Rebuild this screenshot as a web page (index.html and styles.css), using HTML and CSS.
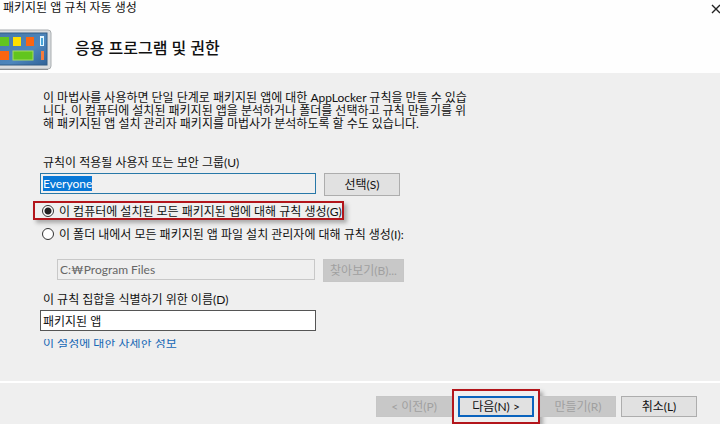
FILE: index.html
```
<!DOCTYPE html>
<html lang="ko">
<head>
  <meta charset="utf-8">
  <title>패키지된 앱 규칙 자동 생성</title>
  <link rel="stylesheet" href="styles.css">
</head>
<body>
  <div class="titlebar">
    <span>패키지된 앱 규칙 자동 생성</span>
    <button class="close" type="button" aria-label="닫기">
      <svg width="10" height="10" viewBox="0 0 10 10"><path d="M1 1L9 9M9 1L1 9" stroke="#222" stroke-width="1.4"/></svg>
    </button>
  </div>
  <header class="banner">
    <svg class="logo" width="52" height="42" viewBox="0 0 52 42">
      <defs>
        <linearGradient id="screen" x1="0" y1="0" x2="1" y2="1">
          <stop offset="0" stop-color="#4779a8"/>
          <stop offset="0.6" stop-color="#4d86bd"/>
          <stop offset="1" stop-color="#2f6298"/>
        </linearGradient>
      </defs>
      <rect x="-6" y="1" width="57" height="39" rx="3" fill="#dadddf" stroke="#a9adb0"/>
      <path d="M0 40.500H48" stroke="#8d9194"/>
      <rect x="-2" y="4" width="49" height="32" fill="url(#screen)" stroke="#315c86"/>
      <rect x="0" y="8" width="9" height="9" fill="#62c51d"/>
      <rect x="13" y="8" width="8" height="9" fill="#ffe000"/>
      <rect x="26" y="8" width="8" height="9" fill="#fb6511"/>
      <rect x="40" y="7" width="4" height="10" fill="#e4f7ff"/>
      <rect x="41" y="9" width="2" height="7" fill="#48a5da"/>
      <rect x="0" y="22" width="9" height="9" fill="#fb6511"/>
      <rect x="13" y="22" width="20" height="9" fill="#62c51d" stroke="#a5dd61"/>
      <rect x="41" y="22" width="3" height="9" fill="#f57b3c"/>
    </svg>
    <h1>응용 프로그램 및 권한</h1>
  </header>
  <main class="page">
    <p class="intro">이 마법사를 사용하면 단일 단계로 패키지된 앱에 대한 AppLocker 규칙을 만들 수 있습<br>니다. 이 컴퓨터에 설치된 패키지된 앱을 분석하거나 폴더를 선택하고 규칙 만들기를 위<br>해 패키지된 앱 설치 관리자 패키지를 마법사가 분석하도록 할 수도 있습니다.</p>

    <label class="caption" for="group">규칙이 적용될 사용자 또는 보안 그룹(U)</label>
    <div class="row">
      <div class="field focused">
        <input id="group" type="text" value="Everyone" readonly autofocus>
      </div>
      <button type="button">선택(S)</button>
    </div>

    <div class="choice marked">
      <input id="installed" type="radio" name="source" checked>
      <label for="installed">이 컴퓨터에 설치된 모든 패키지된 앱에 대해 규칙 생성(G)</label>
    </div>
    <div class="choice">
      <input id="folder" type="radio" name="source">
      <label for="folder">이 폴더 내에서 모든 패키지된 앱 파일 설치 관리자에 대해 규칙 생성(I):</label>
    </div>
    <div class="row path">
      <div class="field off">
        <input type="text" value="C:₩Program Files" aria-label="폴더" disabled>
      </div>
      <button class="browse" type="button" disabled>찾아보기(B)...</button>
    </div>

    <label class="caption" for="name">이 규칙 집합을 식별하기 위한 이름(D)</label>
    <div class="row">
      <div class="field">
        <input id="name" type="text" value="패키지된 앱">
      </div>
    </div>
    <a class="more" href="#">이 설정에 대한 자세한 정보</a>
  </main>
  <footer class="actions">
    <button type="button" disabled>&lt; 이전(P)</button>
    <span class="next"><button class="primary" type="button">다음(N) &gt;</button></span>
    <button type="button" disabled>만들기(R)</button>
    <button class="cancel" type="button">취소(L)</button>
  </footer>
  <script>
    // the group box opens with its text selected
    document.getElementById('group').select();
  </script>
</body>
</html>
```

FILE: styles.css
```
* {
  box-sizing: border-box;
}
body {
  margin: 0;
  min-height: 100vh;
  display: flex;
  flex-direction: column;
  background: #efefef;
  color: #111;
  font-family: Lato, "Noto Sans CJK KR", sans-serif;
  font-size: 12px;
  line-height: 13px;
}
button, input {
  font: inherit;
  color: inherit;
}
.titlebar {
  display: flex;
  justify-content: space-between;
  height: 20px;
  padding: 1px 0 0 3px;
  background: #fefefe;
}
.close {
  width: 16px;
  height: 14px;
  padding: 1px 0 0;
  border: 0;
  background: none;
}
.close svg {
  display: block;
  margin-left: 7px;
}
.banner {
  display: flex;
  gap: 23px;
  height: 53px;
  padding-top: 9px;
  background: #fefefe;
}
.banner h1 {
  margin: 9px 0 0;
  font-size: 16px;
  font-weight: 500;
  line-height: 20px;
}
.page {
  flex: 1;
  padding: 18px 40px 0;
}
.intro {
  margin: 0 0 26px 3px;
}
.caption {
  display: block;
  margin: 0 0 4px 3px;
}
.row {
  display: flex;
  align-items: flex-start;
  gap: 8px;
}
.field {
  width: 276px;
  height: 21px;
  border: 1px solid #555;
  background: #fff;
}
.field input {
  display: block;
  width: 100%;
  height: 19px;
  padding: 0 2px;
  border: 0;
  outline: 0;
  background: none;
}
.field input::selection {
  background: #0878d7;
  color: #fff;
}
.focused {
  border-color: #2878a8;
  background: #f0f0f0;
}
.off {
  width: 258px;
  border-color: #c8c8c8;
  background: none;
  color: #666;
}
button {
  width: 76px;
  height: 23px;
  padding: 0;
  border: 1px solid #adadad;
  background: #e1e1e1;
}
button:disabled {
  border-color: #c6c6c6;
  background: #c8c8c8;
  color: #a0a0a0;
}
.choice {
  display: flex;
  align-items: center;
  gap: 5px;
  width: max-content;
  height: 19px;
  margin: 4px 0 0 -7px;
  padding-left: 9px;
}
.choice label {
  padding-top: 2px;
}
.choice input {
  appearance: none;
  width: 12px;
  height: 12px;
  margin: 0;
  border: 1px solid #333;
  border-radius: 50%;
  background: #fff;
}
.choice input:checked {
  background: radial-gradient(#222 0 3px, #fff 4px);
}
.marked {
  margin-top: 5px;
  padding-left: 7px;
  border: 2px solid #b3151b;
  box-shadow: 3px 3px 4px #aaa;
}
.path {
  margin: 16px 0 11px 17px;
}
.browse {
  width: 81px;
}
.more {
  display: flex;
  align-items: center;
  width: max-content;
  height: 9px;
  margin: 8px 0 0 3px;
  overflow: hidden;
  color: #1768b5;
  text-decoration: none;
}
.actions {
  display: flex;
  justify-content: flex-end;
  align-items: center;
  height: 43px;
  padding: 6px 23px 0 0;
  border-top: 2px solid #fff;
}
.actions button {
  height: 21px;
}
.next {
  padding: 5px 4px;
  border: 2px solid #b3151b;
  box-shadow: 3px 3px 4px #aaa;
}
.next .primary {
  display: block;
  border: 2px solid #0a63bd;
}
.cancel {
  margin-left: 5px;
}
```
